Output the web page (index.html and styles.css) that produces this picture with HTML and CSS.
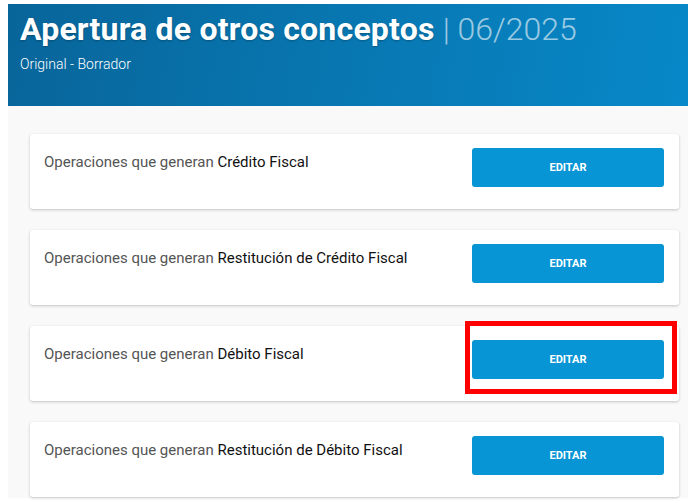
FILE: index.html
```html
<!DOCTYPE html>
<html lang="es">
<head>
  <meta charset="UTF-8">
  <meta name="viewport" content="width=device-width, initial-scale=1.0">
  <title>Apertura de otros conceptos</title>
  <link rel="stylesheet" href="styles.css">
</head>
<body>
  <div class="page">
    <header class="header">
      <h1 class="title">Apertura de otros conceptos <span class="period">| 06/2025</span></h1>
      <div class="subtitle">Original - Borrador</div>
    </header>

    <main class="panel">
      <div class="card">
        <div class="card-text">Operaciones que generan <strong>Crédito Fiscal</strong></div>
        <button class="btn-edit">EDITAR</button>
      </div>

      <div class="card">
        <div class="card-text">Operaciones que generan <strong>Restitución de Crédito Fiscal</strong></div>
        <button class="btn-edit">EDITAR</button>
      </div>

      <div class="card">
        <div class="card-text">Operaciones que generan <strong>Débito Fiscal</strong></div>
        <button class="btn-edit">EDITAR</button>
        <div class="highlight"></div>
      </div>

      <div class="card">
        <div class="card-text">Operaciones que generan <strong>Restitución de Débito Fiscal</strong></div>
        <button class="btn-edit">EDITAR</button>
      </div>
    </main>
  </div>
</body>
</html>
```

FILE: styles.css
```css
body {
  margin: 0;
  font-family: Roboto, 'Noto Sans', sans-serif;
  background-color: #fff;
  color: #333;
}

.page {
  padding: 4px 0 5px 8px;
}

.header {
  height: 102px;
  box-sizing: border-box;
  padding: 7px 12px 0;
  background: linear-gradient(100deg, #08659a 0%, #0877b1 50%, #0788c8 100%);
  color: #fff;
}

.title {
  margin: 0;
  font-size: 32px;
  line-height: 36px;
  font-weight: 700;
  letter-spacing: 0.2px;
  text-shadow: 0 1px 2px rgba(0, 0, 0, 0.25);
}

.period {
  font-weight: 300;
  color: rgba(255, 255, 255, 0.6);
  letter-spacing: 0;
  text-shadow: none;
}

.subtitle {
  margin-top: 9px;
  font-size: 14px;
  line-height: 16px;
  font-weight: 300;
}

.panel {
  background-color: #f9f9f9;
  padding: 28px 9px 1px 22px;
  display: flex;
  flex-direction: column;
  gap: 21px;
}

.card {
  position: relative;
  height: 75px;
  box-sizing: border-box;
  display: flex;
  align-items: flex-start;
  padding: 14px 15px 0 14px;
  background-color: #fff;
  border-radius: 3px;
  box-shadow: 0 1px 3px rgba(0, 0, 0, 0.22);
}

.card-text {
  margin-top: 5px;
  font-size: 15px;
  line-height: 18px;
  color: #555;
}

.card-text strong {
  font-weight: 400;
  color: #111;
}

.btn-edit {
  margin-left: auto;
  width: 192px;
  height: 39px;
  border: none;
  border-radius: 3px;
  background-color: #0795d5;
  color: #fff;
  font-family: Roboto, sans-serif;
  font-size: 11px;
  font-weight: 700;
  cursor: pointer;
}

.highlight {
  position: absolute;
  left: 435px;
  top: -5px;
  width: 212px;
  height: 73px;
  box-sizing: border-box;
  border: 5px solid #f00;
  pointer-events: none;
}
```
